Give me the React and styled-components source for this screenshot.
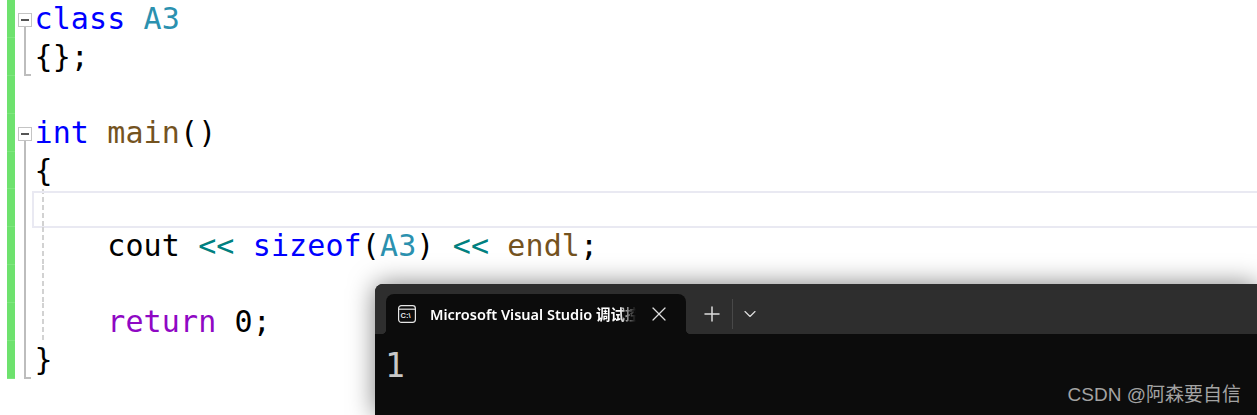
import React from "react"
import styled, { createGlobalStyle } from "styled-components"
import { X, Plus, ChevronDown } from "lucide-react"

const GlobalStyle = createGlobalStyle`
  html, body { margin: 0; padding: 0; background: #fff; }
  #root { height: 415px; }
`

const Page = styled.div`
  position: relative;
  width: 1257px;
  height: 415px;
  overflow: hidden;
  background: #fff;
`

const Editor = styled.div`
  display: flex;
  flex-direction: column;
  padding-left: 7px;
`

const Row = styled.div`
  display: flex;
  height: 37.9px;
`

const ChangeBar = styled.div`
  width: 8px;
  flex: none;
  background: #6ee26e;
  box-shadow: inset 0 -1px 0 #7fe67f;
`

const FoldCell = styled.div`
  width: 17px;
  box-sizing: border-box;
  flex: none;
  display: flex;
  flex-direction: column;
  padding-left: 3px;
`

const FoldBox = styled.div`
  width: 14px;
  height: 14px;
  box-sizing: border-box;
  margin-top: 13px;
  border: 1px solid #c4c4c4;
  display: flex;
  align-items: center;
  justify-content: center;
  &::before {
    content: "";
    width: 8px;
    height: 2px;
    background: #555;
  }
`

const FoldLine = styled.div`
  flex: 1;
  width: 2px;
  margin-left: 6px;
  background: #bdbdbd;
`

const FoldEnd = styled.div`
  flex: 1;
  width: 7px;
  box-sizing: border-box;
  margin-left: 6px;
  border-left: 2px solid #bdbdbd;
  border-bottom: 2px solid #bdbdbd;
`

const Code = styled.pre`
  position: relative;
  flex: 1;
  margin: 0;
  padding-left: 2.5px;
  font-family: "DejaVu Sans Mono", monospace;
  font-size: 30px;
  letter-spacing: 0.12px;
  line-height: 37.9px;
  color: #000;
  background-image: ${(p) =>
    p.$guide ? "linear-gradient(#d2d2d2 62%, transparent 62%)" : "none"};
  background-size: 2px 8px;
  background-position: 10px 0;
  background-repeat: repeat-y;
  &::before {
    content: "";
    display: ${(p) => (p.$current ? "block" : "none")};
    position: absolute;
    inset: 2px 0 -1px 0;
    border: 2px solid #e9e9f2;
    border-right: 0;
  }
`

const Token = styled.span`
  color: ${(p) => p.$color};
`

const Terminal = styled.div`
  position: absolute;
  left: 375px;
  top: 284px;
  right: 0;
  bottom: 0;
  background: #0c0c0c;
  border-top-left-radius: 8px;
  box-shadow: 0 0 26px rgba(0, 0, 0, 0.5);
`

const TitleBar = styled.div`
  height: 50px;
  box-sizing: border-box;
  padding: 10px 0 0 11px;
  display: flex;
  align-items: stretch;
  background: #2e2e2e;
  border-top-left-radius: 8px;
  color: #e6e6e6;
`

const Tab = styled.div`
  position: relative;
  width: 300px;
  box-sizing: border-box;
  padding-left: 12px;
  display: flex;
  align-items: center;
  background: #0c0c0c;
  border-radius: 8px 8px 0 0;
  &::before,
  &::after {
    content: "";
    position: absolute;
    bottom: 0;
    width: 5px;
    height: 5px;
  }
  &::before {
    left: -5px;
    background: radial-gradient(circle at 0 0, transparent 5px, #0c0c0c 5.5px);
  }
  &::after {
    right: -5px;
    background: radial-gradient(circle at 100% 0, transparent 5px, #0c0c0c 5.5px);
  }
`

const TabIcon = styled.svg`
  flex: none;
  width: 18px;
  height: 18px;
  margin-right: 14px;
`

const IconLabel = styled.text`
  font-family: "Liberation Sans", sans-serif;
  font-size: 7.5px;
  font-weight: 700;
  fill: #e6e6e6;
`

const TabTitle = styled.div`
  flex: none;
  width: 206px;
  overflow: hidden;
  white-space: nowrap;
  margin-bottom: 2px;
  font-family: "Noto Sans", "Noto Sans CJK SC", sans-serif;
  font-size: 14.5px;
  font-weight: 600;
  color: #fff;
  mask-image: linear-gradient(to right, #000 92%, transparent 100%);
`

const TabClose = styled.div`
  flex: none;
  margin-left: 11px;
  display: flex;
  color: #ddd;
`

const NewTab = styled.div`
  margin-left: 11px;
  width: 30px;
  display: flex;
  align-items: center;
  justify-content: center;
  color: #ddd;
`

const Divider = styled.div`
  width: 1px;
  height: 30px;
  margin: 5px 0 0 5px;
  background: #484848;
`

const Dropdown = styled.div`
  width: 33px;
  display: flex;
  align-items: center;
  justify-content: center;
  color: #ddd;
`

const Output = styled.pre`
  margin: 0;
  padding: 13px 0 0 10px;
  font-family: "DejaVu Sans Mono", monospace;
  font-size: 33px;
  line-height: 38px;
  color: #c8c8c8;
`

const Watermark = styled.div`
  position: absolute;
  right: 16px;
  bottom: 9px;
  font-family: "Liberation Sans", "Noto Sans CJK SC", sans-serif;
  font-size: 19px;
  line-height: 22px;
  color: #a3a3a3;
`

const BLUE = "#0000ff"
const TYPE = "#2b91af"
const FUNC = "#74531f"
const OP = "#008080"
const FLOW = "#8f08c4"

const rows = [
  { fold: "open", code: <><Token $color={BLUE}>class</Token> <Token $color={TYPE}>A3</Token></> },
  { fold: "end", code: "{};" },
  { code: "" },
  { fold: "open", code: <><Token $color={BLUE}>int</Token> <Token $color={FUNC}>main</Token>()</> },
  { fold: "line", code: "{" },
  { fold: "line", guide: true, current: true, code: "" },
  {
    fold: "line",
    guide: true,
    code: <>    cout <Token $color={OP}>&lt;&lt;</Token> <Token $color={BLUE}>sizeof</Token>(<Token $color={TYPE}>A3</Token>) <Token $color={OP}>&lt;&lt;</Token> <Token $color={FUNC}>endl</Token>;</>,
  },
  { fold: "line", guide: true, code: "" },
  { fold: "line", guide: true, code: <>    <Token $color={FLOW}>return</Token> 0;</> },
  { fold: "end", code: "}" },
]

const Fold = ({ type }) => {
  if (type === "open") return <><FoldBox /><FoldLine /></>
  if (type === "line") return <FoldLine />
  if (type === "end") return <FoldEnd />
  return null
}

const App = () => (
  <Page>
    <GlobalStyle />
    <Editor>
      {rows.map((row, i) => (
        <Row key={i}>
          <ChangeBar />
          <FoldCell><Fold type={row.fold} /></FoldCell>
          <Code $guide={row.guide} $current={row.current}>{row.code}</Code>
        </Row>
      ))}
    </Editor>

    <Terminal>
      <TitleBar>
        <Tab>
          <TabIcon viewBox="0 0 18 18" fill="none">
            <rect x="0.6" y="0.6" width="16.8" height="16.8" rx="2.8" stroke="#e6e6e6" strokeWidth="1.2" />
            <path d="M1 4.2h16" stroke="#e6e6e6" strokeWidth="1.2" />
            <IconLabel x="2.6" y="13.4">C:\</IconLabel>
          </TabIcon>
          <TabTitle>Microsoft Visual Studio 调试控制台</TabTitle>
          <TabClose><X size={24} strokeWidth={1.2} /></TabClose>
        </Tab>
        <NewTab><Plus size={24} strokeWidth={1.5} /></NewTab>
        <Divider />
        <Dropdown><ChevronDown size={20} strokeWidth={1.4} /></Dropdown>
      </TitleBar>
      <Output>1</Output>
    </Terminal>

    <Watermark>CSDN @阿森要自信</Watermark>
  </Page>
)

export default App
